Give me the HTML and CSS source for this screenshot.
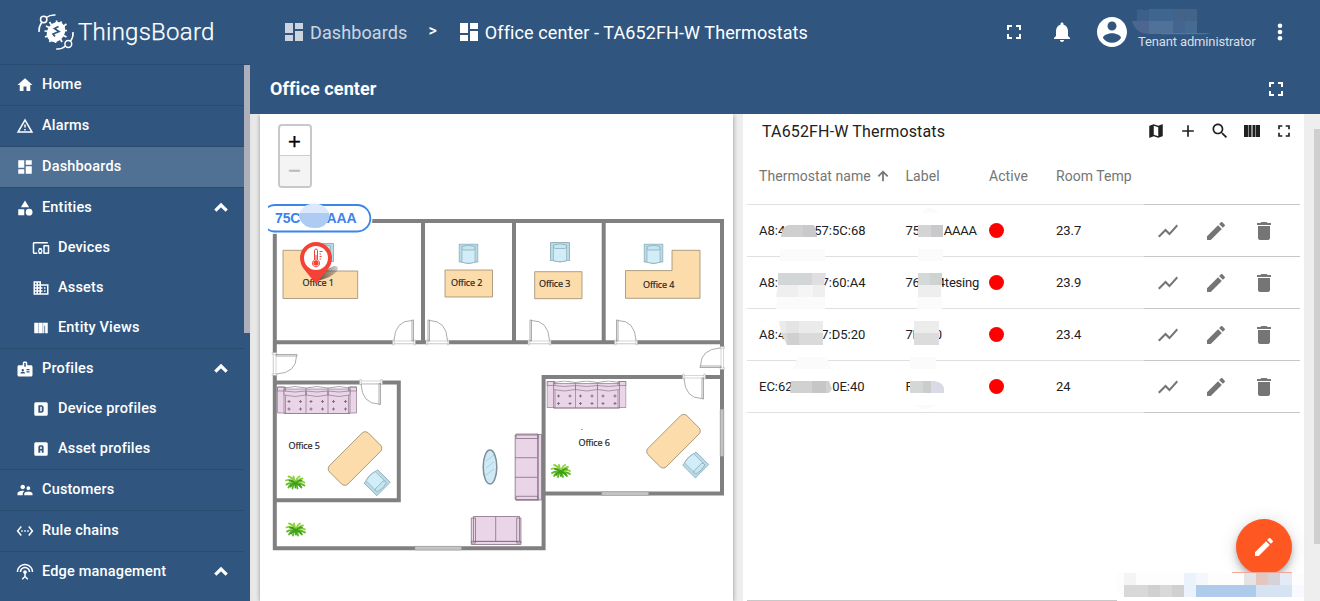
FILE: index.html
```
<!DOCTYPE html>
<html lang="en">
<head>
<meta charset="utf-8">
<title>ThingsBoard | Office center</title>
<link rel="stylesheet" href="styles.css">
</head>
<body>
<svg class="sprite" aria-hidden="true">
  <symbol id="home" viewBox="0 0 24 24"><path d="M10 20v-6h4v6h5v-8h3L12 3 2 12h3v8z"/></symbol>
  <symbol id="warning" viewBox="0 0 24 24"><path d="M12 2L1 21h22L12 2zm0 4l7.530 13H4.470L12 6zm-1 4v4h2v-4h-2zm0 6v2h2v-2h-2z"/></symbol>
  <symbol id="dashboard" viewBox="0 0 24 24"><path d="M3 13h8V3H3v10zm0 8h8v-6H3v6zm10 0h8V11h-8v10zm0-18v6h8V3h-8z"/></symbol>
  <symbol id="category" viewBox="0 0 24 24"><path d="M12 2l-5.500 9h11zM3 13.500h8v8H3z"/><circle cx="17.500" cy="17.500" r="4.500"/></symbol>
  <symbol id="devices" viewBox="0 0 24 24"><path d="M3 6h18V4H3c-1.100 0-2 .9-2 2v12c0 1.100.9 2 2 2h4v-2H3V6zm10 6H9v1.780c-.61.55-1 1.330-1 2.220s.39 1.670 1 2.220V20h4v-1.780c.61-.55 1-1.340 1-2.220s-.39-1.670-1-2.220V12zm-2 5.500c-.83 0-1.500-.67-1.500-1.500s.67-1.500 1.500-1.500 1.500.67 1.500 1.500-.67 1.500-1.500 1.500zM22 8h-6c-.5 0-1 .5-1 1v10c0 .5.5 1 1 1h6c.5 0 1-.5 1-1V9c0-.5-.5-1-1-1zm-1 10h-4v-8h4v8z"/></symbol>
  <symbol id="domain" viewBox="0 0 24 24"><path d="M12 7V3H2v18h20V7H12zM6 19H4v-2h2v2zm0-4H4v-2h2v2zm0-4H4V9h2v2zm0-4H4V5h2v2zm4 12H8v-2h2v2zm0-4H8v-2h2v2zm0-4H8V9h2v2zm0-4H8V5h2v2zm10 12h-8v-2h2v-2h-2v-2h2v-2h-2V9h8v10zm-2-8h-2v2h2v-2zm0 4h-2v2h2v-2z"/></symbol>
  <symbol id="views" viewBox="0 0 24 24"><path d="M3 5h5.500v14H3zM9 5h5.300v14H9zM14.800 5H21v14h-3.500V9h-1v10h-1.700z"/></symbol>
  <symbol id="badge" viewBox="0 0 24 24"><path d="M20 7h-5V4c0-1.100-.9-2-2-2h-2c-1.100 0-2 .9-2 2v3H4c-1.100 0-2 .9-2 2v11c0 1.100.9 2 2 2h16c1.100 0 2-.9 2-2V9c0-1.100-.9-2-2-2zM9 12c.83 0 1.500.67 1.500 1.500S9.830 15 9 15s-1.500-.67-1.500-1.500S8.170 12 9 12zm3 6H6v-.75c0-1 2-1.500 3-1.500s3 .5 3 1.500V18zm1-9h-2V4h2v5zm5 7.500h-4V15h4v1.500zm0-3h-4V12h4v1.500z"/></symbol>
  <symbol id="dbox" viewBox="0 0 24 24"><path fill-rule="evenodd" d="M5 3h14a2 2 0 0 1 2 2v14a2 2 0 0 1-2 2H5a2 2 0 0 1-2-2V5a2 2 0 0 1 2-2zM8.500 7v10h5l2-2V9l-2-2zm2.500 2h2v6h-2z"/></symbol>
  <symbol id="abox" viewBox="0 0 24 24"><path fill-rule="evenodd" d="M5 3h14a2 2 0 0 1 2 2v14a2 2 0 0 1-2 2H5a2 2 0 0 1-2-2V5a2 2 0 0 1 2-2zM10 7L8.500 8.500V17H11v-3h2v3h2.500V8.500L14 7zm1 2h2v3h-2z"/></symbol>
  <symbol id="people" viewBox="0 0 24 24"><path d="M16.500 12c1.380 0 2.490-1.120 2.490-2.500S17.880 7 16.500 7 14 8.120 14 9.500s1.120 2.500 2.500 2.500zM9 11c1.660 0 2.990-1.340 2.990-3S10.660 5 9 5 6 6.340 6 8s1.340 3 3 3zm7.500 3c-1.830 0-5.500.92-5.500 2.750V19h11v-2.250c0-1.830-3.670-2.750-5.500-2.750zM9 13c-2.330 0-7 1.170-7 3.500V19h7v-2.250c0-.85.33-2.340 2.370-3.470C10.500 13.100 9.660 13 9 13z"/></symbol>
  <symbol id="chain" viewBox="0 0 24 24"><path d="M7.770 6.760L6.230 5.480.82 12l5.410 6.520 1.540-1.280L3.420 12l4.350-5.240zM7 13h2v-2H7v2zm10-2h-2v2h2v-2zm-6 2h2v-2h-2v2zm6.770-7.520l-1.540 1.280L20.580 12l-4.350 5.240 1.540 1.280L23.180 12l-5.410-6.520z"/></symbol>
  <symbol id="antenna" viewBox="0 0 24 24"><path d="M12 5c-3.870 0-7 3.130-7 7h2c0-2.760 2.240-5 5-5s5 2.240 5 5h2c0-3.870-3.130-7-7-7zm1 9.290c.88-.39 1.500-1.260 1.500-2.290 0-1.380-1.120-2.500-2.500-2.500S9.500 10.620 9.500 12c0 1.020.62 1.900 1.500 2.290v3.300L7.590 21 9 22.410l3-3 3 3L16.410 21 13 17.590v-3.300zM12 1C5.930 1 1 5.930 1 12h2c0-4.970 4.030-9 9-9s9 4.030 9 9h2c0-6.070-4.930-11-11-11z"/></symbol>
  <symbol id="chevron" viewBox="0 0 24 24"><path d="M3.500 16L12 7.500l8.500 8.500" fill="none" stroke="currentColor" stroke-width="4.800"/></symbol>
  <symbol id="fullscreen" viewBox="0 0 24 24"><path d="M7 14H5v5h5v-2H7v-3zm-2-4h2V7h3V5H5v5zm12 7h-3v2h5v-5h-2v3zM14 5v2h3v3h2V5h-5z"/></symbol>
  <symbol id="bell" viewBox="0 0 24 24"><path d="M12 22c1.100 0 2-.9 2-2h-4c0 1.100.89 2 2 2zm6-6v-5c0-3.070-1.640-5.640-4.500-6.320V4c0-.83-.67-1.500-1.500-1.500s-1.500.67-1.500 1.500v.68C7.630 5.360 6 7.920 6 11v5l-2 2v1h16v-1l-2-2z"/></symbol>
  <symbol id="account" viewBox="0 0 24 24"><path d="M12 2C6.480 2 2 6.480 2 12s4.480 10 10 10 10-4.480 10-10S17.520 2 12 2zm0 3c1.660 0 3 1.340 3 3s-1.340 3-3 3-3-1.340-3-3 1.340-3 3-3zm0 14.200c-2.500 0-4.710-1.280-6-3.220.03-1.990 4-3.080 6-3.080 1.990 0 5.970 1.090 6 3.080-1.290 1.940-3.500 3.220-6 3.220z"/></symbol>
  <symbol id="more" viewBox="0 0 24 24"><circle cx="12" cy="5.700" r="2.300"/><circle cx="12" cy="12" r="2.300"/><circle cx="12" cy="18.300" r="2.300"/></symbol>
  <symbol id="map" viewBox="0 0 24 24"><path d="M20.500 3l-.16.03L15 5.100 9 3 3.360 4.900c-.21.07-.36.25-.36.48V20.500c0 .28.22.5.5.5l.16-.03L9 18.900l6 2.100 5.640-1.900c.21-.07.36-.25.36-.48V3.500c0-.28-.22-.5-.5-.5zM15 19l-6-2.110V5l6 2.110V19z"/></symbol>
  <symbol id="add" viewBox="0 0 24 24"><path d="M19 13h-6v6h-2v-6H5v-2h6V5h2v6h6v2z"/></symbol>
  <symbol id="search" viewBox="0 0 24 24"><path d="M15.500 14h-.79l-.28-.27C15.410 12.590 16 11.110 16 9.500 16 5.910 13.090 3 9.500 3S3 5.910 3 9.500 5.910 16 9.500 16c1.610 0 3.090-.59 4.230-1.570l.27.28v.79l5 4.990L20.490 19l-4.990-5zm-6 0C7.010 14 5 11.990 5 9.500S7.010 5 9.500 5 14 7.010 14 9.500 11.990 14 9.500 14z"/></symbol>
  <symbol id="columns" viewBox="0 0 20 20"><path d="M2 4h4v12H2zM6.500 4h3v12h-3zM10.500 4h3v12h-3zM14 4h4v12h-4z"/></symbol>
  <symbol id="up" viewBox="0 0 24 24"><path d="M12 21V5M4 12.500l8-8 8 8" fill="none" stroke="currentColor" stroke-width="3"/></symbol>
  <symbol id="chart" viewBox="0 0 24 24"><path d="M3.500 18.490l6-6.010 4 4L22 6.920l-1.410-1.410-7.090 7.970-4-4L2 16.990z"/></symbol>
  <symbol id="edit" viewBox="0 0 24 24"><path d="M3 17.250V21h3.750L17.810 9.940l-3.750-3.750L3 17.250zM20.710 7.040c.39-.39.39-1.020 0-1.410l-2.340-2.340c-.39-.39-1.020-.39-1.410 0l-1.830 1.830 3.750 3.750 1.830-1.830z"/></symbol>
  <symbol id="delete" viewBox="0 0 24 24"><path d="M6 19c0 1.100.9 2 2 2h8c1.100 0 2-.9 2-2V7H6v12zM19 4h-3.500l-1-1h-5l-1 1H5v2h14V4z"/></symbol>
  <symbol id="chair" viewBox="0 0 20 21"><path d="M.5.5h19v18h-2.200q-7.300 3-14.600 0H.5z" fill="#b7dce9" stroke="#7f99a3" stroke-width=".7"/><path d="M3.500 5.500h13v13.300q-6.500 2-13 0z" fill="#d0edf8" stroke="#8aa5af" stroke-width=".6"/><path d="M3.500 5.500V3q6.500-2.500 13 0v2.500l-1.500 1H5z" fill="#c4e6f2" stroke="#7f99a3" stroke-width=".6"/></symbol>
  <symbol id="sofa" viewBox="0 0 80 29"><g fill="#e9d4e8" stroke="#8d7a88" stroke-width=".7"><path d="M.5 1h8v26h-8zM71.500 1h8v26h-8zM7 3h66v24.500H7zM.5 1H7v4H.5zM73 1h6.500v4H73z"/><path d="M7 5Q18 7 29 5v4q-11 3-22 0zM29 5q11 2 22 0v4q-11 3-22 0zM51 5q11 2 22 0v4q-11 3-22 0z"/><path d="M7 2q11-3 22 0 11-3 22 0 11-3 22 0M29 2v25.500M51 2v25.500M7 27.500h66" fill="none"/></g><path d="M10.500 15.500h3M22 15.500h3M32.500 15.500h3M44 15.500h3M55 15.500h3M67 15.500h3M10.500 23h3M22 23h3M32.500 23h3M44 23h3M55 23h3M67 23h3M12 14v3M23.500 14v3M34 14v3M45.500 14v3M56.500 14v3M68.500 14v3M12 21.500v3M23.500 21.500v3M34 21.500v3M45.500 21.500v3M56.500 21.500v3M68.500 21.500v3" stroke="#7a667a" stroke-width=".9"/></symbol>
  <symbol id="plant" viewBox="0 0 22 17"><g fill="none" stroke-linecap="round" stroke-width="1.800"><path stroke="#8ad23c" d="M11 9Q7 2 4 2M11 9Q9 3 9 2M11 9q1-6 4-7M11 9q4-5 7-5M11 9Q5 4 1.500 6M11 9q6-3 9-1"/><path stroke="#5cb526" d="M11 9Q5 8 2 10M11 9q-6 1-7 4M11 9q6 0 9 2M11 9q5 2 6 4M11 9q-3 2-3 5M11 9q2 3 2 5"/><path stroke="#3f9d18" d="M11 9Q8 6 5 6M11 9q3-4 6-3M10 9q-3 1-4 3M12 9q3 1 4 3M11 8v5"/></g></symbol>
  <symbol id="door" viewBox="0 0 24 25" overflow="visible"><path d="M1 20.500h22v4.500H1z" fill="#fff"/><path d="M.7 20.500h1.500v5H.7zM21.800 20.500h1.500v5h-1.500zM2 21.500h20M2 24h20" fill="#fff" stroke="#bbb" stroke-width=".6"/><path d="M2.500.5H4v21H2.500zM4 1Q21 1 22 21" fill="none" stroke="#888" stroke-width=".7"/></symbol>
</svg>

<div class="app">
  <aside class="side">
    <div class="brand">
      <svg class="logo" viewBox="36 12 40 40">
        <g fill="none" stroke="#fff" stroke-width="1.500">
          <circle cx="43.700" cy="19.500" r="3.200"/><circle cx="68.300" cy="44" r="3.400"/>
          <path d="M39 32q-.5-5 2.700-9.500M46.300 17.500q4-3 9.200-2.500M73 32q.5 5-2.500 9.300M65.500 46q-4 3.500-9.300 3"/>
          <path stroke-width="1.700" d="M49.500 22l2 3M56.500 20.500l.5 3.500M61.500 21.500l-1.500 3M66.500 24l-4 3M67 30.500l-4 .5M66.500 37l-4-2M62 42l-2-4M55.500 43v-4M49.500 42l2-4M45 37l5-2M44.500 31l5 .5M46 26l5 2.500"/>
        </g>
        <ellipse cx="56" cy="32" rx="8.600" ry="10.600" transform="rotate(35 56 32)" fill="#fff"/>
        <path d="M58.500 26.500l-4 2 4.500 3-6 2.500 2 2.500" fill="none" stroke="#305680" stroke-width="1.700"/>
      </svg>
      <span class="brand-name">ThingsBoard</span>
    </div>
    <nav class="menu">
      <div class="group"><a class="item"><svg><use href="#home"/></svg><span>Home</span></a></div>
      <div class="group"><a class="item"><svg><use href="#warning"/></svg><span>Alarms</span></a></div>
      <div class="group active"><a class="item"><svg><use href="#dashboard"/></svg><span>Dashboards</span></a></div>
      <div class="group">
        <a class="item"><svg><use href="#category"/></svg><span>Entities</span><svg class="chev"><use href="#chevron"/></svg></a>
        <a class="item sub"><svg><use href="#devices"/></svg><span>Devices</span></a>
        <a class="item sub"><svg><use href="#domain"/></svg><span>Assets</span></a>
        <a class="item sub"><svg><use href="#views"/></svg><span>Entity Views</span></a>
      </div>
      <div class="group">
        <a class="item"><svg><use href="#badge"/></svg><span>Profiles</span><svg class="chev"><use href="#chevron"/></svg></a>
        <a class="item sub"><svg><use href="#dbox"/></svg><span>Device profiles</span></a>
        <a class="item sub"><svg><use href="#abox"/></svg><span>Asset profiles</span></a>
      </div>
      <div class="group"><a class="item"><svg><use href="#people"/></svg><span>Customers</span></a></div>
      <div class="group"><a class="item"><svg><use href="#chain"/></svg><span>Rule chains</span></a></div>
      <div class="group last"><a class="item"><svg><use href="#antenna"/></svg><span>Edge management</span><svg class="chev"><use href="#chevron"/></svg></a></div>
    </nav>
    <i class="side-scroll"></i>
  </aside>

  <main class="main">
    <header class="top">
      <div class="crumbs">
        <svg class="dim"><use href="#dashboard"/></svg><span class="crumb dim">Dashboards</span>
        <span class="sep">&gt;</span>
        <svg><use href="#dashboard"/></svg><span class="crumb">Office center - TA652FH-W Thermostats</span>
      </div>
      <div class="tools">
        <svg class="i24"><use href="#fullscreen"/></svg>
        <svg class="i24 bell"><use href="#bell"/></svg>
        <svg class="avatar"><use href="#account"/></svg>
        <div class="user">
          <svg class="user-name" viewBox="0 0 80 26"><path fill="#3c608c" d="M6 2Q6 0 12 0v13H6z"/><path fill="#3c608c" d="M6 1h12v12H6z"/><path fill="#3e6690" d="M18 0h24v13H18z"/><path fill="#436388" d="M42 0h24v13H42z"/><path fill="#4c6691" d="M1 12h17v13Q5 25 1 12z"/><path fill="#507298" d="M18 12h24v13H18z"/><path fill="#44658f" d="M42 12h12v13H42z"/><path fill="#466b93" d="M54 12h12v13H54z"/><path fill="#5a7b9d" d="M30 24.300h50l-6 1H30z"/></svg>
          <span class="role">Tenant administrator</span>
        </div>
        <svg class="i24 more"><use href="#more"/></svg>
      </div>
    </header>
    <div class="bar"><h1>Office center</h1><svg class="i24"><use href="#fullscreen"/></svg></div>

    <div class="content">
      <section class="card plan-card">
        <svg class="plan" viewBox="268 114 457 487">
          <g fill="none" stroke="#808080" stroke-width="4">
            <path d="M274.800 221H722v272.600H543.600"/><path d="M274.800 219v329.200H543.600V377H722M274.800 342.300H722M423 221v121M514 221v121M603.700 221v121M274.800 382.500h124v117.800h-124"/>
          </g>
          <g fill="#c3c3c3" stroke="#999" stroke-width=".5">
            <path d="M415 546.300h46.500v3.800H415zM601.700 491.700h47v3.800h-47zM720.200 409.300h3.600v47h-3.600z"/>
          </g>
          <use href="#door" x="425.500" y="319.500" width="24" height="25"/>
          <use href="#door" x="527.500" y="319.500" width="24" height="25"/>
          <use href="#door" x="614" y="319.500" width="24" height="25"/>
          <g transform="translate(416 319.500) scale(-1 1)"><use href="#door" width="24" height="25"/></g>
          <g transform="translate(383 405) rotate(180)"><use href="#door" width="24" height="25"/></g>
          <g transform="translate(706 399.500) rotate(180)"><use href="#door" width="24" height="25"/></g>
          <g transform="translate(297.500 352) rotate(90)"><use href="#door" width="24" height="25"/></g>
          <g transform="translate(699.500 370) rotate(-90)"><use href="#door" width="24" height="25"/></g>

          <g fill="#fddcac" stroke="#9b8a70" stroke-width=".8">
            <path d="M283 250.300h28V271h46.700v27.500H283zM445 270h47.500v27H445zM534.700 271.700H582v27h-47.300zM672 250.300h28v48h-74.500v-27.700H672z"/>
            <rect x="327.500" y="445.500" width="55" height="26" rx="4.500" transform="rotate(-45 355 458.500)"/>
            <rect x="646" y="428.200" width="55" height="26" rx="4.500" transform="rotate(-45 673.500 441.200)"/>
          </g>
          <use href="#chair" x="314" y="243" width="20" height="21"/>
          <use href="#chair" x="458.500" y="243.500" width="20" height="21"/>
          <use href="#chair" x="550" y="242" width="20" height="21"/>
          <use href="#chair" x="643.500" y="243.500" width="20" height="21"/>
          <use href="#chair" x="366.500" y="471.500" width="20" height="21" transform="rotate(135 376.500 482)"/>
          <use href="#chair" x="685" y="453.700" width="20" height="21" transform="rotate(135 695 464.200)"/>
          <use href="#sofa" x="277" y="386" width="80" height="29"/>
          <use href="#sofa" x="546.500" y="380.500" width="80" height="29"/>
          <g fill="#e9d4e8" stroke="#84707f" stroke-width=".8">
            <path d="M515.200 435h23v64.500h-23zM516 434h22v4.500h-22zM516 496.300h22v4h-22zM537.700 434.500h3.800v65.500h-3.800zM515 457.700h22M515 477.300h22"/>
            <path d="M473.500 516.500h46v25h-46zM471.300 518h4.200v25h-4.200zM516.700 518h4.200v25h-4.200zM471.300 541.300h49.600v3.200h-49.600zM495.700 516.500v24.800"/>
          </g>
          <ellipse cx="490" cy="467" rx="6.800" ry="17" fill="#cdeaf6" stroke="#7d8f96" stroke-width="1.500"/>
          <path d="M486 461l8-6M486 468l8-6M486 475l8-6" stroke="#9fc3d1" stroke-width=".7"/>
          <use href="#plant" x="284.500" y="474.500" width="22" height="17"/>
          <use href="#plant" x="285" y="521.500" width="22" height="17"/>
          <use href="#plant" x="550" y="463" width="22" height="17"/>
          <path d="M581 429.500h2" stroke="#999" stroke-width=".8"/>
          <g class="room">
            <text x="302.500" y="286">Office 1</text><text x="451" y="286.300">Office 2</text><text x="539" y="287">Office 3</text>
            <text x="643" y="287.500">Office 4</text><text x="288.500" y="448.500">Office 5</text><text x="578.500" y="445.800">Office 6</text>
          </g>

          <rect x="257" y="202" width="115.500" height="32" rx="15" fill="#fff" opacity=".85"/>
          <rect x="262" y="205" width="108.300" height="26.500" rx="13" fill="#fff" stroke="#3b86e8" stroke-width="1.800"/>
          <g class="tag"><text x="275" y="223">75C</text><text x="326.500" y="223">AAA</text></g>
          <ellipse cx="314.300" cy="215.700" rx="15" ry="12.300" fill="#dce8fb"/>
          <path d="M299.300 213h30v3q-2 12-14 12t-16-10z" fill="#aecbf3"/>

          <defs><linearGradient id="shade"><stop offset="0" stop-color="#222" stop-opacity=".8"/><stop offset="1" stop-color="#444" stop-opacity=".25"/></linearGradient></defs>
          <path d="M317 281q7-12 17-15 6 0 3 5-4 6-20 10z" fill="url(#shade)"/>
          <path d="M316 284l-10.500-13q-5.500-6-5.500-13a16 16 0 0 1 32 0q0 7-5.500 13z" fill="#f44336"/>
          <circle cx="316" cy="258" r="12" fill="#fff"/>
          <path d="M314.500 250.500a1.500 1.500 0 0 1 3 0v9.500a3.600 3.600 0 1 1-3 0z" fill="#fff" stroke="#f44336" stroke-width="1"/>
          <circle cx="316" cy="263" r="2.600" fill="#f44336"/><path d="M316 255v8M319.500 251.500h3M319.500 254h1.500M319.500 256.500h2M319.500 259h1.500" stroke="#f44336" stroke-width="1"/>
        </svg>
        <div class="zoom"><span>+</span><span class="off">−</span></div>
      </section>

      <section class="card table-card">
        <div class="title-row">
          <h2>TA652FH-W Thermostats</h2>
          <div class="actions">
            <svg><use href="#map"/></svg><svg><use href="#add"/></svg><svg><use href="#search"/></svg><svg><use href="#columns"/></svg><svg><use href="#fullscreen"/></svg>
          </div>
        </div>
        <div class="grid">
          <div class="row head"><span>Thermostat name<svg class="sort"><use href="#up"/></svg></span><span>Label</span><span>Active</span><span>Room Temp</span><span class="ops"></span></div>
          <div class="row"><span>A8:4<i style="width:29px"></i>57:5C:68</span><span>75<i style="width:24px"></i>AAAA</span><span><b></b></span><span>23.7</span><span class="ops"><svg><use href="#chart"/></svg><svg><use href="#edit"/></svg><svg><use href="#delete"/></svg></span></div>
          <div class="row"><span>A8:<i style="width:43.500px"></i>7:60:A4</span><span>76<i style="width:18px"></i>4tesing</span><span><b></b></span><span>23.9</span><span class="ops"><svg><use href="#chart"/></svg><svg><use href="#edit"/></svg><svg><use href="#delete"/></svg></span></div>
          <div class="row"><span>A8:4<i style="width:36px"></i>7:D5:20</span><span>7E<i style="width:15px"></i>0</span><span><b></b></span><span>23.4</span><span class="ops"><svg><use href="#chart"/></svg><svg><use href="#edit"/></svg><svg><use href="#delete"/></svg></span></div>
          <div class="row"><span>EC:62<i style="width:39.500px"></i>0E:40</span><span>F</span><span><b></b></span><span>24</span><span class="ops"><svg><use href="#chart"/></svg><svg><use href="#edit"/></svg><svg><use href="#delete"/></svg></span></div>
        </div>
        <div class="foot-line"></div>

        <svg class="mosaic" viewBox="743 114 561 487">
          <g fill="#fbfbfb"><path d="M780 249h45v12h-45zM918 249h25v12h-25zM777 297h48v12h-49zM917 297h25v12h-25zM798 357h29l4 12h-38zM910 357h26v12h-26zM914 405h22q-10 8-22 0zM921 213q9-10 18 0z"/></g>
          <path fill="#cfcfcf" d="M781 236q2-11 8-11h25l3 12h-36z"/><path fill="#c9c9cb" d="M803 225h11l3 12h-14z"/>
          <path fill="#d5d4d4" d="M918 225h13v12h-13z"/><path fill="#c9c9cc" d="M931 225h12v12h-12z"/>
          <path fill="#d3d6d6" d="M778 273h37v12h-37z"/><path fill="#dfdfe1" d="M812 273h14l-2 12h-12z"/><path fill="#efefef" d="M778 285h47v12h-49z"/><path fill="#f5f5f5" d="M798 285h15v12h-15z"/>
          <path fill="#d5d8d9" d="M918 273h24v12h-24z"/><path fill="#cdd3d1" d="M930 273h12v12h-12z"/><path fill="#eee" d="M918 285h23v12h-23z"/>
          <path fill="#ebebeb" d="M779 321h44v12h-42z"/><path fill="#e4e4e4" d="M786 321h13v12h-13z"/><path fill="#dadada" d="M781 333h42v12h-36z"/><path fill="#d0d0d0" d="M787 333h12v12h-12z"/>
          <path fill="#ececec" d="M914 321h25v12h-25z"/><path fill="#dcdcdc" d="M914 333h25v12h-25z"/>
          <path fill="#d1d1d2" d="M791 381h38l3 8-3 4h-39z"/><path fill="#c6c6c7" d="M812 381h14v12h-14z"/>
          <path fill="#d3d7d5" d="M910 381h14v12h-14z"/><path fill="#ccc" d="M923 381h8v12h-8z"/><path fill="#d9dae6" d="M931 381h4q8 2 9 7v5h-13z"/>
        </svg>
      </section>
      <i class="main-scroll"></i>

      <div class="fab"><svg><use href="#edit"/></svg></div>
      <svg class="smudge" viewBox="1112 572 208 29">
        <path fill="#fdfdfd" d="M1118 573h186v24h-182q-9-10-4-24z"/><path fill="#f4f4f4" d="M1124 573h12v12h-12z"/><path fill="#eaf2fc" d="M1184 573h12v24h-12z"/><path fill="#f4f8fd" d="M1196 573h12v12h-12z"/>
        <path fill="#e4e4e6" d="M1244 573h12v12h-12z"/><path fill="#e3c6bd" d="M1256 573h12v12h-12z"/><path fill="#d5d3d8" d="M1268 573h12v12h-12z"/><path fill="#e5ebf6" d="M1280 573h12v12h-12z"/>
        <path fill="#d8d8d8" d="M1124 585h60v12h-60z"/><path fill="#d0d0d0" d="M1148 585h12v12h-12zM1172 585h12v12h-12z"/>
        <path fill="#aecbeb" d="M1196 585h60v12h-60z"/><path fill="#d5e3f3" d="M1256 585h36v12h-36z"/><path fill="#f7faff" d="M1292 585h12v12h-12z"/><path fill="#f2a899" d="M1232 572h60v1h-60z"/>
      </svg>
    </div>
  </main>
</div>
</body>
</html>
```

FILE: styles.css
```
* { box-sizing: border-box; }
body { margin: 0; font-family: Roboto, "Liberation Sans", sans-serif; background: #eee; color: #212121; overflow: hidden; }
svg { fill: currentColor; display: block; flex: none; }
.sprite { position: absolute; width: 0; height: 0; }
.app { display: flex; width: 1320px; height: 601px; overflow: hidden; }

.side { position: relative; width: 250px; flex: none; background: #305680; color: #fff; }
.brand { display: flex; align-items: center; height: 65px; padding-left: 36px; border-bottom: 1px solid #2a4c72; }
.logo { width: 40px; height: 40px; }
.brand-name { margin-left: 2px; font-size: 24px; font-weight: 300; letter-spacing: .25px; line-height: 30px; -webkit-text-stroke: .25px; }
.menu { width: 244px; }
.group { border-bottom: 1px solid #294b70; }
.group.last { border-bottom: 0; }
.active { background: #507094; }
.item { display: flex; align-items: center; height: 40px; padding: 0 15px 0 16px; font-size: 14.500px; font-weight: 500; letter-spacing: .18px; }
.item svg { width: 18px; height: 18px; margin-right: 8px; }
.item span { padding-bottom: 2px; }
.item.sub { padding-left: 32px; }
.item .chev { width: 16px; height: 16px; margin: 0 0 0 auto; }
.side-scroll { position: absolute; right: 0; top: 65px; width: 6px; height: 268px; background: #adb0bb; }

.main { flex: 1; display: flex; flex-direction: column; min-width: 0; }
.top { display: flex; justify-content: space-between; height: 64px; background: #305680; color: #fff; padding: 0 28px 0 32px; }
.crumbs { display: flex; align-items: center; font-size: 18px; }
.crumbs svg { width: 24px; height: 24px; margin-right: 4px; }
.crumb { letter-spacing: .11px; }
.dim { opacity: .75; }
.sep { margin: 0 20px 4px 21px; font-size: 16px; font-weight: 500; }
.tools { display: flex; align-items: center; }
.i24 { width: 24px; height: 24px; }
.bell { margin-left: 24px; }
.avatar { width: 36px; height: 36px; margin-left: 20px; }
.user { width: 122px; height: 64px; padding-top: 9px; margin-left: 1px; }
.user-name { width: 80px; height: 26px; }
.role { display: block; margin: -2px 0 0 7px; font-size: 13px; letter-spacing: -.14px; line-height: 17px; color: #d6dfe8; white-space: nowrap; }
.more { margin-left: 15px; margin-right: 0; }
.bar { display: flex; justify-content: space-between; align-items: center; height: 50px; padding: 0 32px 0 20px; background: #305680; color: #fff; }
h1 { margin: 0; padding-bottom: 2px; font-size: 18px; font-weight: 700; letter-spacing: .1px; }

.content { position: relative; display: flex; flex: 1; gap: 10px; padding-left: 10px; background: linear-gradient(90deg, #e4e4e4, #eee 8px); }
.card { position: relative; background: #fff; box-shadow: 0 1px 5px rgba(0,0,0,.4); clip-path: inset(0 -6px 0 -6px); }
.plan-card { width: 473px; padding-left: 8px; }
.plan { width: 457px; height: 487px; }
.room { font: 9px "Open Sans", sans-serif; letter-spacing: -.12px; fill: #222; stroke: #222; stroke-width: .2; }
.tag { font: bold 14px "Liberation Sans", sans-serif; letter-spacing: -.1px; fill: #3b82ea; }
.zoom { position: absolute; left: 18px; top: 10px; width: 34px; border: 2px solid #c8c8c8; border-radius: 4px; overflow: hidden; font: 22px/31px "Liberation Sans", sans-serif; text-align: center; color: #000; }
.zoom span { display: block; height: 29px; padding-right: 1px; -webkit-text-stroke: .3px; }
.zoom .off { height: 31px; border-top: 1px solid #ccc; background: #f4f4f4; color: #bbb; line-height: 30px; }

.table-card { width: 561px; padding: 0 4px; box-shadow: none; }
.title-row { display: flex; justify-content: space-between; align-items: center; height: 34px; padding: 0 6px 0 15px; }
h2 { margin: 0; font-size: 16px; font-weight: 400; letter-spacing: .15px; }
.actions { display: flex; gap: 12px; }
.actions svg { width: 20px; height: 20px; }
.actions svg:first-child { width: 18px; height: 18px; margin: 1px; }
.row { display: grid; grid-template-columns: 158.500px 83.500px 67px 88px 156px; height: 52px; font-size: 13px; }
.row > span { display: flex; align-items: center; border-bottom: 1px solid #e0e0e0; white-space: nowrap; }
.row > span:first-child { padding-left: 12px; }
.row > span:nth-child(2) { letter-spacing: -.2px; }
.row i { display: inline-block; flex: none; }
.row b { width: 15px; height: 15px; border-radius: 50%; background: #f00; }
.row > .ops { gap: 24px; padding-left: 12px; border-color: #c6c6c6; color: #757575; }
.ops svg { width: 24px; height: 24px; }
.head { height: 57px; font-size: 14px; letter-spacing: .05px; color: #757575; }
.row.head > span:nth-child(2) { letter-spacing: .05px; }
.sort { width: 14px; height: 14px; margin-left: 5px; }
.foot-line { width: 370px; height: 1px; margin-top: 187px; background: #c8c8c8; }
.mosaic { position: absolute; left: 0; top: 0; width: 561px; height: 487px; }
.main-scroll { position: absolute; right: 0; top: 15px; width: 6px; height: 415px; background: #cfcfcf; }
.fab { position: absolute; right: 28px; top: 405px; display: grid; place-items: center; width: 56px; height: 56px; border-radius: 50%; background: #ff5722; color: #fff; box-shadow: 0 3px 5px -1px rgba(0,0,0,.2), 0 6px 10px rgba(0,0,0,.14), 0 1px 18px rgba(0,0,0,.12); }
.fab svg { width: 24px; height: 24px; }
.smudge { position: absolute; right: 0; bottom: 0; width: 208px; height: 29px; }
```
